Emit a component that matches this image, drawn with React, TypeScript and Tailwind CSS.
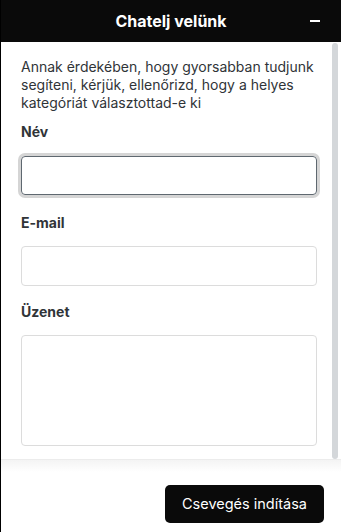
import React from "react";

export default function App() {
  return (
    <div
      className="w-[341px] h-[532px] bg-white flex flex-col border-l border-black overflow-hidden"
      style={{ fontFamily: "Inter, 'Noto Sans', sans-serif" }}
    >
      <div className="h-[42px] bg-[#0a0a0a] flex items-center justify-center relative shrink-0">
        <span className="text-white text-[16px] font-bold">Chatelj velünk</span>
        <div className="absolute right-[21px] top-[20px] w-[10px] h-[2px] bg-white" />
      </div>
      <div className="h-[417px] flex shrink-0">
        <div className="flex-1 pl-[20px] pr-[15px] pt-[16px] flex flex-col">
          <p className="text-[14px] leading-[18px] text-[#303438]">
            Annak érdekében, hogy gyorsabban tudjunk segíteni, kérjük, ellenőrizd, hogy a helyes kategóriát választottad-e ki
          </p>
          <label className="mt-[10px] text-[14px] leading-[20px] font-bold text-[#303438]">Név</label>
          <div className="mt-[14px] h-[39px] rounded-[4px] border border-[#5f6870] ring-[3px] ring-[#d5d5d5]" />
          <label className="mt-[18px] text-[14px] leading-[20px] font-bold text-[#303438]">E-mail</label>
          <div className="mt-[13px] h-[40px] rounded-[4px] border border-[#dcdcdc]" />
          <label className="mt-[16px] text-[14px] leading-[20px] font-bold text-[#303438]">Üzenet</label>
          <div className="mt-[13px] h-[111px] rounded-[4px] border border-[#dcdcdc]" />
        </div>
        <div className="w-[9px] pr-[3px] pt-[1px] shrink-0">
          <div className="w-[6px] h-full rounded-full bg-[#d4d7da]" />
        </div>
      </div>
      <div className="flex-1 border-t border-[#ececec] bg-gradient-to-b from-[#f4f4f4] to-white to-[12px] flex justify-end items-start pt-[25px] pr-[17px]">
        <button className="h-[38px] w-[159px] rounded-[5px] bg-[#0a0a0a] text-white text-[14.5px]">
          Csevegés indítása
        </button>
      </div>
    </div>
  );
}
